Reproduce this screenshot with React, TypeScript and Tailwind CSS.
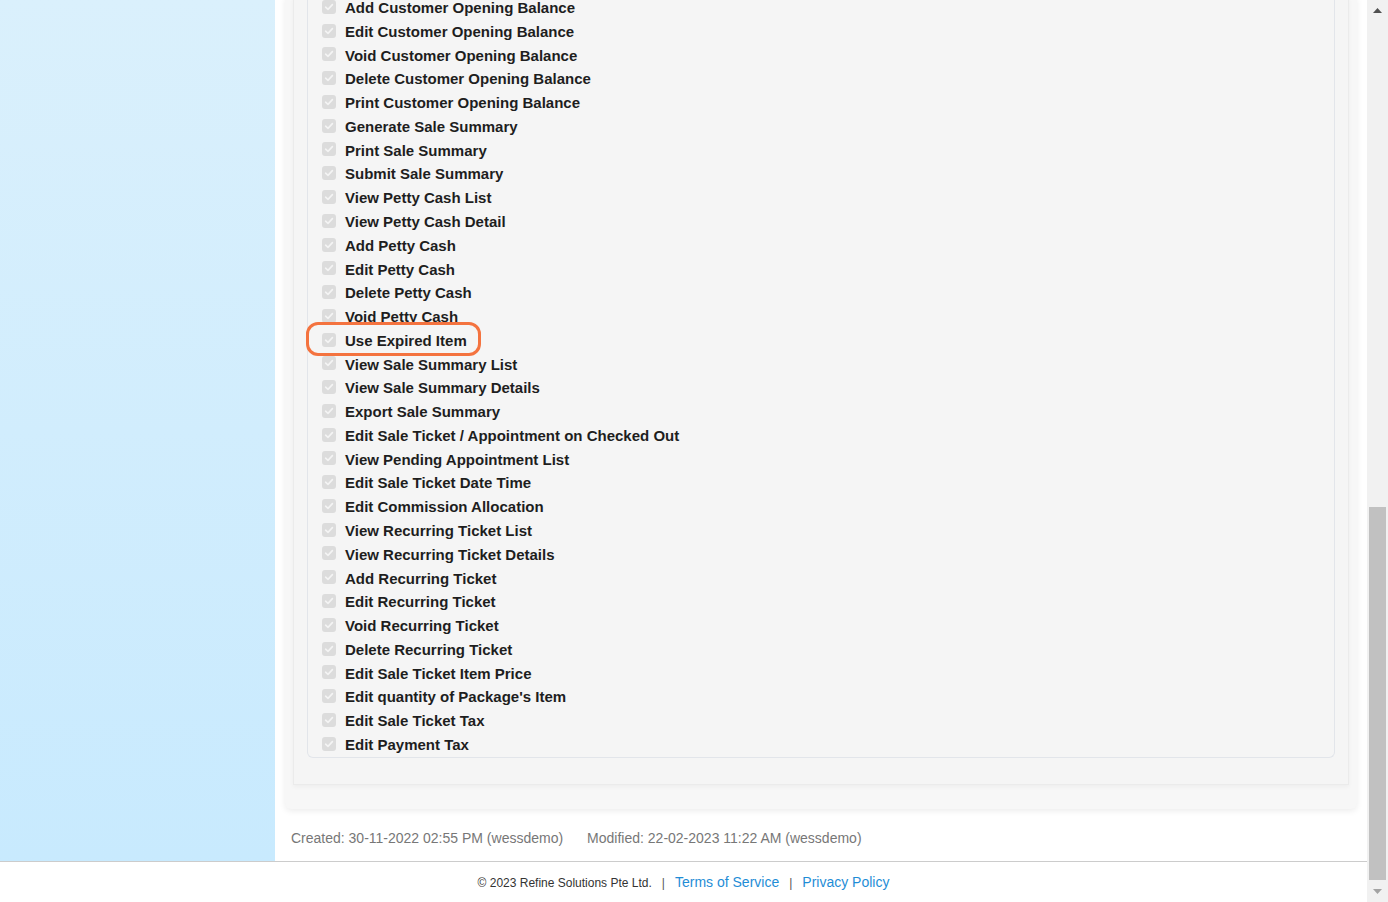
import React from "react";

const PERMS = [
  "Add Customer Opening Balance",
  "Edit Customer Opening Balance",
  "Void Customer Opening Balance",
  "Delete Customer Opening Balance",
  "Print Customer Opening Balance",
  "Generate Sale Summary",
  "Print Sale Summary",
  "Submit Sale Summary",
  "View Petty Cash List",
  "View Petty Cash Detail",
  "Add Petty Cash",
  "Edit Petty Cash",
  "Delete Petty Cash",
  "Void Petty Cash",
  "Use Expired Item",
  "View Sale Summary List",
  "View Sale Summary Details",
  "Export Sale Summary",
  "Edit Sale Ticket / Appointment on Checked Out",
  "View Pending Appointment List",
  "Edit Sale Ticket Date Time",
  "Edit Commission Allocation",
  "View Recurring Ticket List",
  "View Recurring Ticket Details",
  "Add Recurring Ticket",
  "Edit Recurring Ticket",
  "Void Recurring Ticket",
  "Delete Recurring Ticket",
  "Edit Sale Ticket Item Price",
  "Edit quantity of Package's Item",
  "Edit Sale Ticket Tax",
  "Edit Payment Tax",
];

function Check() {
  return (
    <span className="mt-[-3px] flex h-[14px] w-[14px] shrink-0 items-center justify-center rounded-[3px] bg-[#dcdcdc]">
      <svg width="10" height="10" viewBox="0 0 10 10" fill="none">
        <path d="M1.6 5.2 4 7.4 8.4 2.6" stroke="#f4f4f4" strokeWidth="1.6" strokeLinecap="round" strokeLinejoin="round" />
      </svg>
    </span>
  );
}

function Scrollbar() {
  return (
    <div className="flex h-full w-[21px] shrink-0 flex-col bg-[#f1f1f1]">
      <div className="flex h-[21px] items-center justify-center">
        <svg width="9" height="6" viewBox="0 0 9 6">
          <path d="M4.5 0 9 5H0z" fill="#505050" />
        </svg>
      </div>
      <div className="flex-1 px-[2px] pt-[486px] pb-[1px]">
        <div className="h-full bg-[#c1c1c1]" />
      </div>
      <div className="flex h-[21px] items-center justify-center">
        <svg width="9" height="6" viewBox="0 0 9 6">
          <path d="M0 0h9L4.5 5z" fill="#a3a3a3" />
        </svg>
      </div>
    </div>
  );
}

export default function App() {
  return (
    <div className="flex h-[902px] w-[1388px] overflow-hidden bg-white font-['Liberation_Sans',Arial,sans-serif]">
      <div className="flex min-w-0 flex-1 flex-col">
        <div className="flex min-h-0 flex-1">
          {/* sidebar */}
          <div className="w-[275px] shrink-0 bg-gradient-to-b from-[#daf0fc] to-[#c8eafe]" />

          {/* main, scrolled to the bottom */}
          <div className="flex min-w-0 flex-1 flex-col justify-end overflow-hidden">
            <div className="mx-[10px] rounded-b-[6px] bg-[#f7f7f7] px-[8px] pb-[24px] shadow-[0_2px_6px_rgba(0,0,0,0.08)]">
              <div className="border-x border-b border-[#ebebeb] bg-[#f5f5f5] px-[13px] pb-[26px] shadow-[0_2px_4px_rgba(0,0,0,0.04)]">
                <div className="rounded-b-[6px] border-x border-b border-[#e2e5ea] bg-[#f5f5f5] pl-[14px]">
                  {PERMS.map((p) => (
                    <div key={p} className="relative flex h-[23.77px] items-center gap-[9px]">
                      <Check />
                      <span className="text-[15px] font-bold tracking-[0px] text-[#1e1e1e] whitespace-nowrap">{p}</span>
                      {p === "Use Expired Item" && (
                        <span className="pointer-events-none absolute left-[-16px] top-[-7px] h-[34px] w-[175px] rounded-[12px] border-[3px] border-[#f4733f]" />
                      )}
                    </div>
                  ))}
                </div>
              </div>
            </div>
            <div className="flex gap-[24px] pb-[12px] pl-[16px] pt-[19px] text-[14px] text-[#777]">
              <span>Created: 30-11-2022 02:55 PM (wessdemo)</span>
              <span>Modified: 22-02-2023 11:22 AM (wessdemo)</span>
            </div>
          </div>
        </div>

        {/* footer */}
        <div className="flex h-[41px] shrink-0 items-center justify-center border-t border-[#cccccc] pt-[1px] text-[#333]">
          <span className="text-[12px]">© 2023 Refine Solutions Pte Ltd.</span>
          <span className="px-[10px] text-[12px] text-[#555]">|</span>
          <span className="text-[14px] text-[#1f8dd6]">Terms of Service</span>
          <span className="px-[10px] text-[12px] text-[#555]">|</span>
          <span className="text-[14px] text-[#1f8dd6]">Privacy Policy</span>
        </div>
      </div>
      <Scrollbar />
    </div>
  );
}
